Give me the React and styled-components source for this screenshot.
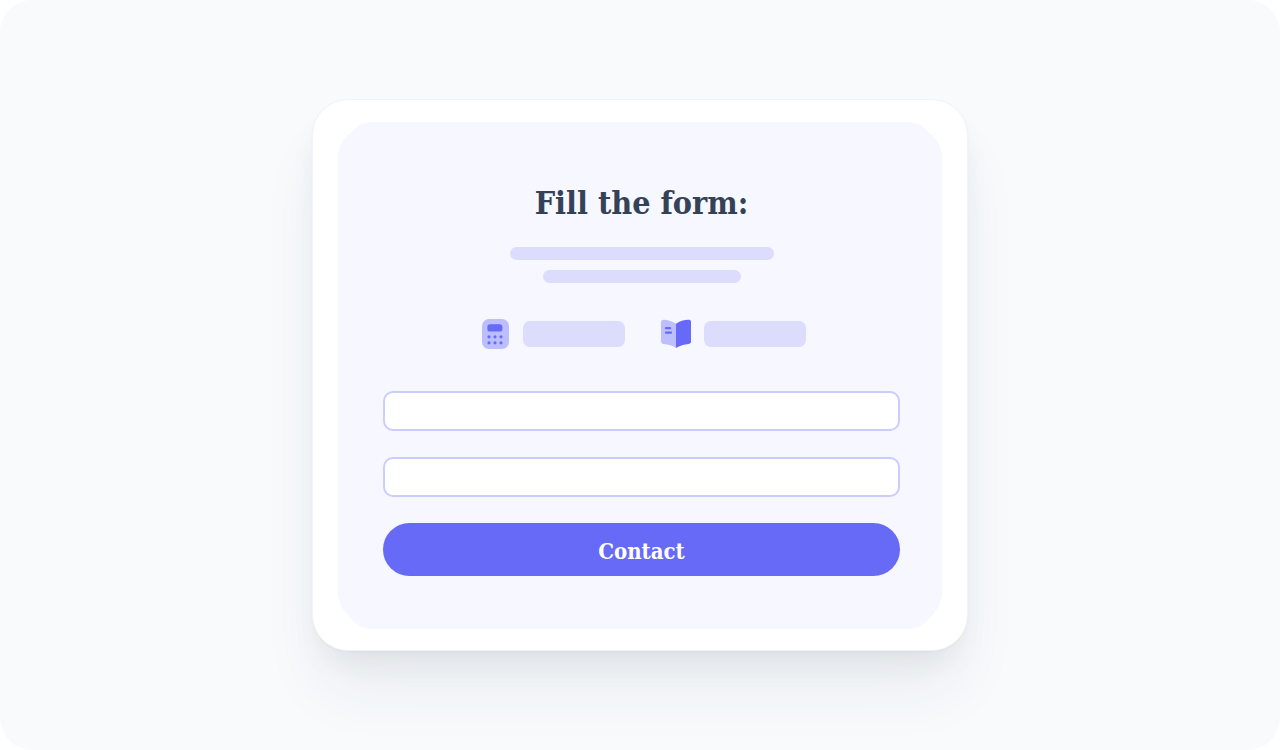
import React from "react";
import styled, { createGlobalStyle } from "styled-components";

const GlobalStyle = createGlobalStyle`
  *, *::before { box-sizing: border-box; }
  body { margin: 0; background: #ffffff; }
`;

const slab = `"Roboto Slab", "DejaVu Serif Condensed", "DejaVu Serif", serif`;

const Stage = styled.main`
  display: flex;
  align-items: center;
  justify-content: center;
  min-height: 100vh;
  padding: 24px;
  border-radius: 32px;
  background: #f8fafc;
  overflow: hidden;
`;

const Card = styled.section`
  width: 100%;
  max-width: 656px;
  padding: 26px 25px;
  border: 1px solid #f0f4fa;
  border-radius: 36px;
  background: #ffffff;
  box-shadow: 0 1px 2px rgba(40, 60, 90, 0.04), 0 16px 30px -8px rgba(40, 50, 70, 0.08),
    0 44px 64px -8px rgba(40, 60, 80, 0.07);
`;

const Panel = styled.div`
  position: relative;
  z-index: 0;
  padding: 56px 42px 48px 45px;
  border-radius: 32px;
  background: #f6f7ff;

  &::before {
    content: "";
    position: absolute;
    z-index: -1;
    inset: -4px 8px -5px;
    border-radius: 26px;
    background: #f6f7ff;
  }
`;

const Form = styled.form`
  display: flex;
  flex-direction: column;
  align-items: center;
`;

const Title = styled.h1`
  margin: 0;
  font: 700 32px/42px ${slab};
  color: #334257;
  text-align: center;
  white-space: nowrap;
`;

const Lines = styled.div`
  display: flex;
  flex-direction: column;
  align-items: center;
  gap: 10px;
  width: 100%;
  margin-top: 23px;
`;

const Placeholder = styled.div`
  width: ${(p) => p.$width}px;
  max-width: 100%;
  height: ${(p) => p.$height}px;
  border-radius: 7px;
  background: #dcdcfd;
`;

const Features = styled.div`
  display: flex;
  justify-content: center;
  gap: 36px;
  margin: 36px 0 42px;
  padding-left: 4px;
`;

const Feature = styled.div`
  display: flex;
  align-items: center;
  gap: 13px;
`;

const Fields = styled.div`
  display: flex;
  flex-direction: column;
  gap: 26px;
  width: 100%;
`;

const Field = styled.input`
  width: 100%;
  height: 40px;
  padding: 0 14px;
  border: 2px solid #cbccff;
  border-radius: 10px;
  background: #ffffff;
  font: 400 16px/24px ${slab};
  color: #334257;
`;

const Submit = styled.button`
  width: 100%;
  height: 53px;
  padding: 2px 0 0;
  border: 0;
  border-radius: 27px;
  background: #666af6;
  color: #ffffff;
  font: 700 22px/32px ${slab};
  cursor: pointer;
`;

function CalculatorIcon() {
  return (
    <svg width="28" height="30" viewBox="0 0 28 30" aria-hidden="true">
      <rect x="0" y="0" width="27" height="30" rx="7" fill="#bcbefe" />
      <rect x="5.4" y="5.2" width="15" height="7.4" rx="2.6" fill="#666af6" />
      {[7, 13, 19].map((x) =>
        [17.8, 23.8].map((y) => (
          <circle key={`${x}-${y}`} cx={x} cy={y} r="1.6" fill="#666af6" />
        ))
      )}
    </svg>
  );
}

function BookIcon() {
  return (
    <svg width="30" height="30" viewBox="0 0 30 30" aria-hidden="true">
      <path
        d="M15 4.8C11.5 2.4 7 1 2.7.8C1.1.7 0 1.7 0 3.2V22.2C0 23.7 1 24.7 2.6 24.9C7.1 25.3 11.3 26.2 15.2 29V4.8Z"
        fill="#bcbefe"
      />
      <path
        d="M15 4.8C18.6 2.3 23 .9 27.4.8C29 .7 30.2 1.7 30.2 3.2V22.2C30.2 23.7 29.1 24.7 27.6 24.9C23.1 25.4 18.8 26.4 15 29V4.8Z"
        fill="#666af6"
      />
      <path
        d="M5 9.2H9M5 13.7H10"
        fill="none"
        stroke="#666af6"
        strokeWidth="2.2"
        strokeLinecap="round"
      />
    </svg>
  );
}

export default function App() {
  return (
    <>
      <GlobalStyle />
      <Stage>
        <Card>
          <Panel>
            <Form onSubmit={(event) => event.preventDefault()}>
              <Title>Fill the form:</Title>
              <Lines>
                <Placeholder $width={264} $height={13} />
                <Placeholder $width={198} $height={13} />
              </Lines>
              <Features>
                <Feature>
                  <CalculatorIcon />
                  <Placeholder $width={102} $height={26} />
                </Feature>
                <Feature>
                  <BookIcon />
                  <Placeholder $width={102} $height={26} />
                </Feature>
              </Features>
              <Fields>
                <Field type="text" name="name" aria-label="Name" />
                <Field type="email" name="email" aria-label="Email" />
                <Submit type="submit">Contact</Submit>
              </Fields>
            </Form>
          </Panel>
        </Card>
      </Stage>
    </>
  );
}
